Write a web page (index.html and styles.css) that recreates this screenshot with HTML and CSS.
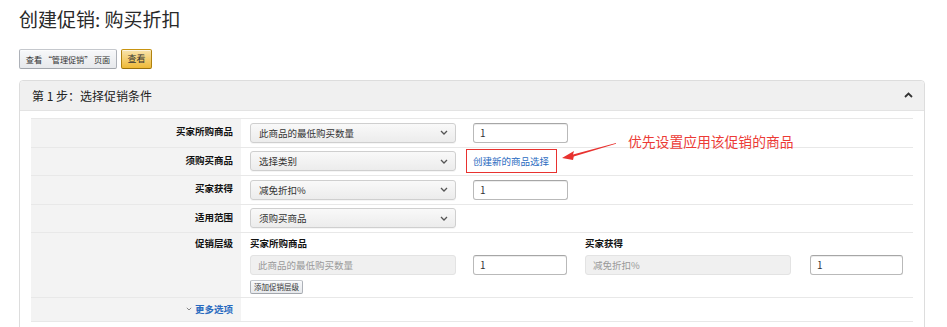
FILE: index.html
```html
<!DOCTYPE html>
<html lang="zh-CN">
<head>
<meta charset="utf-8">
<title>创建促销: 购买折扣</title>
<link rel="stylesheet" href="styles.css">
</head>
<body>
<div class="page">
  <h1 class="title">创建促销: 购买折扣</h1>
  <div class="actions">
    <button class="btn btn-wide">查看 “管理促销” 页面</button>
    <button class="btn btn-primary">查看</button>
  </div>

  <section class="panel">
    <header class="panel-head">
      <span class="panel-title">第 1 步：选择促销条件</span>
      <svg class="caret-up" width="9" height="6" viewBox="0 0 9 6"><path d="M1 5 L4.5 1.5 L8 5" fill="none" stroke="#333" stroke-width="1.8"/></svg>
    </header>
    <div class="panel-body">
      <div class="form">
        <div class="row">
          <div class="label">买家所购商品</div>
          <div class="field">
            <div class="select"><span>此商品的最低购买数量</span><svg class="chev" width="8" height="5" viewBox="0 0 8 5"><path d="M1 1 L4 4 L7 1" fill="none" stroke="#555" stroke-width="1.3"/></svg></div>
            <div class="input">1</div>
          </div>
        </div>
        <div class="row">
          <div class="label">须购买商品</div>
          <div class="field">
            <div class="select"><span>选择类别</span><svg class="chev" width="8" height="5" viewBox="0 0 8 5"><path d="M1 1 L4 4 L7 1" fill="none" stroke="#555" stroke-width="1.3"/></svg></div>
            <div class="annot-wrap">
              <span class="annot-box"><a class="link" href="#">创建新的商品选择</a></span>
              <svg class="annot-arrow" width="56" height="20" viewBox="0 0 56 20"><polygon points="0,16 12,9 11,12.6 54,1 54,1.8 11.8,14.6 11,18" fill="#e8322f"/></svg>
              <span class="annot-text">优先设置应用该促销的商品</span>
            </div>
          </div>
        </div>
        <div class="row">
          <div class="label">买家获得</div>
          <div class="field">
            <div class="select"><span>减免折扣%</span><svg class="chev" width="8" height="5" viewBox="0 0 8 5"><path d="M1 1 L4 4 L7 1" fill="none" stroke="#555" stroke-width="1.3"/></svg></div>
            <div class="input">1</div>
          </div>
        </div>
        <div class="row">
          <div class="label">适用范围</div>
          <div class="field">
            <div class="select"><span>须购买商品</span><svg class="chev" width="8" height="5" viewBox="0 0 8 5"><path d="M1 1 L4 4 L7 1" fill="none" stroke="#555" stroke-width="1.3"/></svg></div>
          </div>
        </div>
        <div class="row row-tier">
          <div class="label">促销层级</div>
          <div class="field tiers">
            <div class="tier-grid">
              <div class="tier-head">买家所购商品</div>
              <div></div>
              <div class="tier-head">买家获得</div>
              <div></div>
              <div class="disabled">此商品的最低购买数量</div>
              <div class="input">1</div>
              <div class="disabled">减免折扣%</div>
              <div class="input input-last">1</div>
            </div>
            <button class="btn btn-small">添加促销层级</button>
          </div>
        </div>
        <div class="row row-more">
          <div class="label"><a class="more" href="#"><svg width="6" height="4" viewBox="0 0 6 4"><path d="M0.8 0.8 L3 3 L5.2 0.8" fill="none" stroke="#888" stroke-width="1"/></svg>更多选项</a></div>
          <div class="field"></div>
        </div>
      </div>
    </div>
  </section>
</div>
</body>
</html>
```

FILE: styles.css
```css
* { box-sizing: border-box; }
html, body { margin: 0; padding: 0; background: #fff; }
body {
  font-family: "Noto Sans CJK SC", "Microsoft YaHei", "Noto Sans", sans-serif;
  color: #333;
  overflow: hidden;
}
.page { padding: 0 22px 0 19px; }
.title {
  margin: 7px 0 0;
  font-size: 19px;
  line-height: 24px;
  font-weight: 400;
  color: #2a2a2a;
}
.actions { display: flex; gap: 4px; margin-top: 18px; }
.btn {
  font-family: inherit;
  font-size: 9px;
  line-height: 18px;
  height: 20px;
  padding: 0 8px;
  color: #333;
  border: 1px solid #adb1b8;
  border-color: #c5c8cd #adb1b8 #a2a6ac;
  border-radius: 2px;
  background: linear-gradient(#f7f8fa, #e7e9ec);
  box-shadow: 0 1px 0 rgba(255,255,255,.6) inset;
  white-space: nowrap;
}
.btn-wide { width: 98px; padding: 0; font-size: 8.2px; letter-spacing: -0.1px; }
.btn-primary {
  width: 31px;
  padding: 0;
  border-color: #c89411 #b0820f #99710d;
  background: linear-gradient(#f8e3ad, #eeba37);
}
.panel {
  margin-top: 11px;
  border: 1px solid #ddd;
  border-radius: 4px 4px 0 0;
  height: 260px;
}
.panel-head {
  height: 30px;
  display: flex;
  align-items: center;
  justify-content: space-between;
  padding: 0 11px 0 12px;
  background: #f0f0f0;
  border-bottom: 1px solid #e3e3e3;
  border-radius: 4px 4px 0 0;
}
.panel-title { font-size: 12px; color: #222; }
.caret-up { display: block; margin-top: -1px; }
.panel-body { padding: 7px 11px 0 11px; }
.form { border-top: 1px solid #e8e8e8; }
.row {
  display: grid;
  grid-template-columns: 210px 1fr;
  border-bottom: 1px solid #e8e8e8;
}
.label {
  background: #f3f3f3;
  display: flex;
  align-items: center;
  justify-content: flex-end;
  padding: 0 8px 3px 0;
  font-size: 9.5px;
  font-weight: 700;
  line-height: 14px;
  color: #111;
}
.field {
  display: flex;
  align-items: center;
  padding: 0 0 0 9px;
  height: 27.5px;
}
.select {
  width: 206px;
  height: 20px;
  display: flex;
  align-items: center;
  justify-content: space-between;
  padding: 0 7px 0 8px;
  font-size: 9.5px;
  color: #333;
  border: 1px solid #cfcfcf;
  border-radius: 3px;
  background: linear-gradient(#f9f9f9, #ececec);
  box-shadow: 0 1px 0 rgba(0,0,0,.04);
}
.chev { display: block; }
.input {
  width: 95px;
  height: 20px;
  margin-left: 17px;
  padding: 0 6px;
  font-size: 10px;
  line-height: 18px;
  color: #333;
  border: 1px solid #b9b9b9;
  border-top-color: #a6a6a6;
  border-radius: 3px;
  background: #fff;
  box-shadow: 0 1px 0 rgba(0,0,0,.07) inset;
}
.annot-wrap {
  position: relative;
  display: flex;
  align-items: center;
  margin-left: 10px;
}
.annot-box {
  display: inline-flex;
  align-items: center;
  height: 24px;
  width: 91px;
  padding-left: 6px;
  border: 1.5px solid #e8322f;
}
.link { font-size: 9.5px; color: #2a6bbf; text-decoration: none; }
.annot-arrow {
  position: absolute;
  left: 96px;
  top: -7px;
}
.annot-text {
  position: absolute;
  left: 162px;
  top: -18px;
  white-space: nowrap;
  font-size: 13.8px;
  color: #ec3b36;
}
.row-tier .label { align-items: flex-start; padding: 3px 8px 0 0; }
.field.tiers {
  height: auto;
  flex-direction: column;
  align-items: flex-start;
  padding: 3px 0 3px 9px;
}
.tier-grid {
  display: grid;
  grid-template-columns: 206px 129px 206px 112px;
  row-gap: 5px;
  align-items: center;
}
.tier-head {
  font-size: 9.5px;
  font-weight: 700;
  color: #111;
  line-height: 14px;
}
.tier-grid .input { width: 94px; margin-left: 17px; }
.tier-grid .input-last { width: 93px; margin-left: 19px; }
.disabled {
  height: 20px;
  padding: 0 7px;
  font-size: 9.5px;
  line-height: 18px;
  color: #999;
  background: #f0f0f0;
  border: 1px solid #e3e3e3;
  border-radius: 3px;
}
.btn-small {
  margin-top: 5px;
  height: 14px;
  width: 53px;
  font-size: 7.5px;
  line-height: 12px;
  padding: 0;
}
.row-more .label { height: 23px; padding-bottom: 1px; }
.row-more .field { height: 23px; padding: 0; }
.more {
  display: inline-flex;
  align-items: center;
  gap: 3px;
  color: #2a6bbf;
  text-decoration: none;
  font-size: 9.5px;
  font-weight: 700;
}
.more svg { display: block; }
```
